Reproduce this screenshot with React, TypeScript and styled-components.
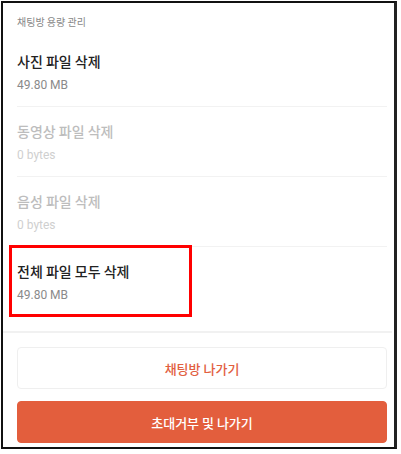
import React from "react";
import styled, { createGlobalStyle } from "styled-components";

const Global = createGlobalStyle`
  html, body { margin: 0; padding: 0; background: #fff; }
  body { font-family: "Noto Sans CJK KR", "Noto Sans", sans-serif; }
`;

const Page = styled.div`
  padding: 1px 0 0 1px;
  width: 401px;
  height: 454px;
  box-sizing: border-box;
`;

const Frame = styled.div`
  width: 396px;
  height: 448px;
  box-sizing: border-box;
  border: 2px solid #111;
  border-right: 3px solid #222;
  background: #fff;
  display: flex;
  flex-direction: column;
  overflow: hidden;
`;

const Section = styled.div`
  padding: 0 7px 0 14px;
  display: flex;
  flex-direction: column;
`;

const Header = styled.div`
  font-size: 10px;
  line-height: 16px;
  color: #888;
  padding: 11px 0 7px;
`;

const Row = styled.div<{ $last?: boolean }>`
  position: relative;
  padding: 13px 0 ${(p) => (p.$last ? "27px" : "12px")};
  border-bottom: ${(p) => (p.$last ? "none" : "1px solid #f2f2f2")};
`;

const Title = styled.div<{ $muted?: boolean }>`
  font-size: 14px;
  line-height: 22px;
  font-weight: 500;
  color: ${(p) => (p.$muted ? "#bdbdbd" : "#222")};
`;

const Size = styled.div<{ $muted?: boolean }>`
  margin-top: 4px;
  font-size: 12px;
  line-height: 18px;
  font-family: Roboto, "Noto Sans", sans-serif;
  color: ${(p) => (p.$muted ? "#cfcfcf" : "#8a8a8a")};
`;

const Highlight = styled.div`
  position: absolute;
  left: -8px;
  top: -2px;
  width: 183px;
  height: 72px;
  box-sizing: border-box;
  border: 3px solid #ff0000;
  pointer-events: none;
`;

const Separator = styled.div`
  height: 2px;
  background: #f1f1f1;
  margin: 0 2px 0 0;
`;

const Actions = styled.div`
  padding: 14px 7px 0 14px;
  display: flex;
  flex-direction: column;
  gap: 12px;
`;

const Button = styled.button<{ $primary?: boolean }>`
  height: 42px;
  width: 100%;
  border-radius: 4px;
  font-family: "Noto Sans CJK KR", "Noto Sans", sans-serif;
  font-size: 13px;
  font-weight: 500;
  cursor: pointer;
  border: 1px solid ${(p) => (p.$primary ? "#e35e3d" : "#efefef")};
  background: ${(p) => (p.$primary ? "#e35e3d" : "#fff")};
  color: ${(p) => (p.$primary ? "#fff" : "#e2603f")};
`;

const items = [
  { title: "사진 파일 삭제", size: "49.80 MB", muted: false },
  { title: "동영상 파일 삭제", size: "0 bytes", muted: true },
  { title: "음성 파일 삭제", size: "0 bytes", muted: true },
];

export default function App() {
  return (
    <>
      <Global />
      <Page>
        <Frame>
          <Section>
            <Header>채팅방 용량 관리</Header>
            {items.map((it) => (
              <Row key={it.title}>
                <Title $muted={it.muted}>{it.title}</Title>
                <Size $muted={it.muted}>{it.size}</Size>
              </Row>
            ))}
            <Row $last>
              <Title>전체 파일 모두 삭제</Title>
              <Size>49.80 MB</Size>
              <Highlight />
            </Row>
          </Section>
          <Separator />
          <Actions>
            <Button>채팅방 나가기</Button>
            <Button $primary>초대거부 및 나가기</Button>
          </Actions>
        </Frame>
      </Page>
    </>
  );
}
